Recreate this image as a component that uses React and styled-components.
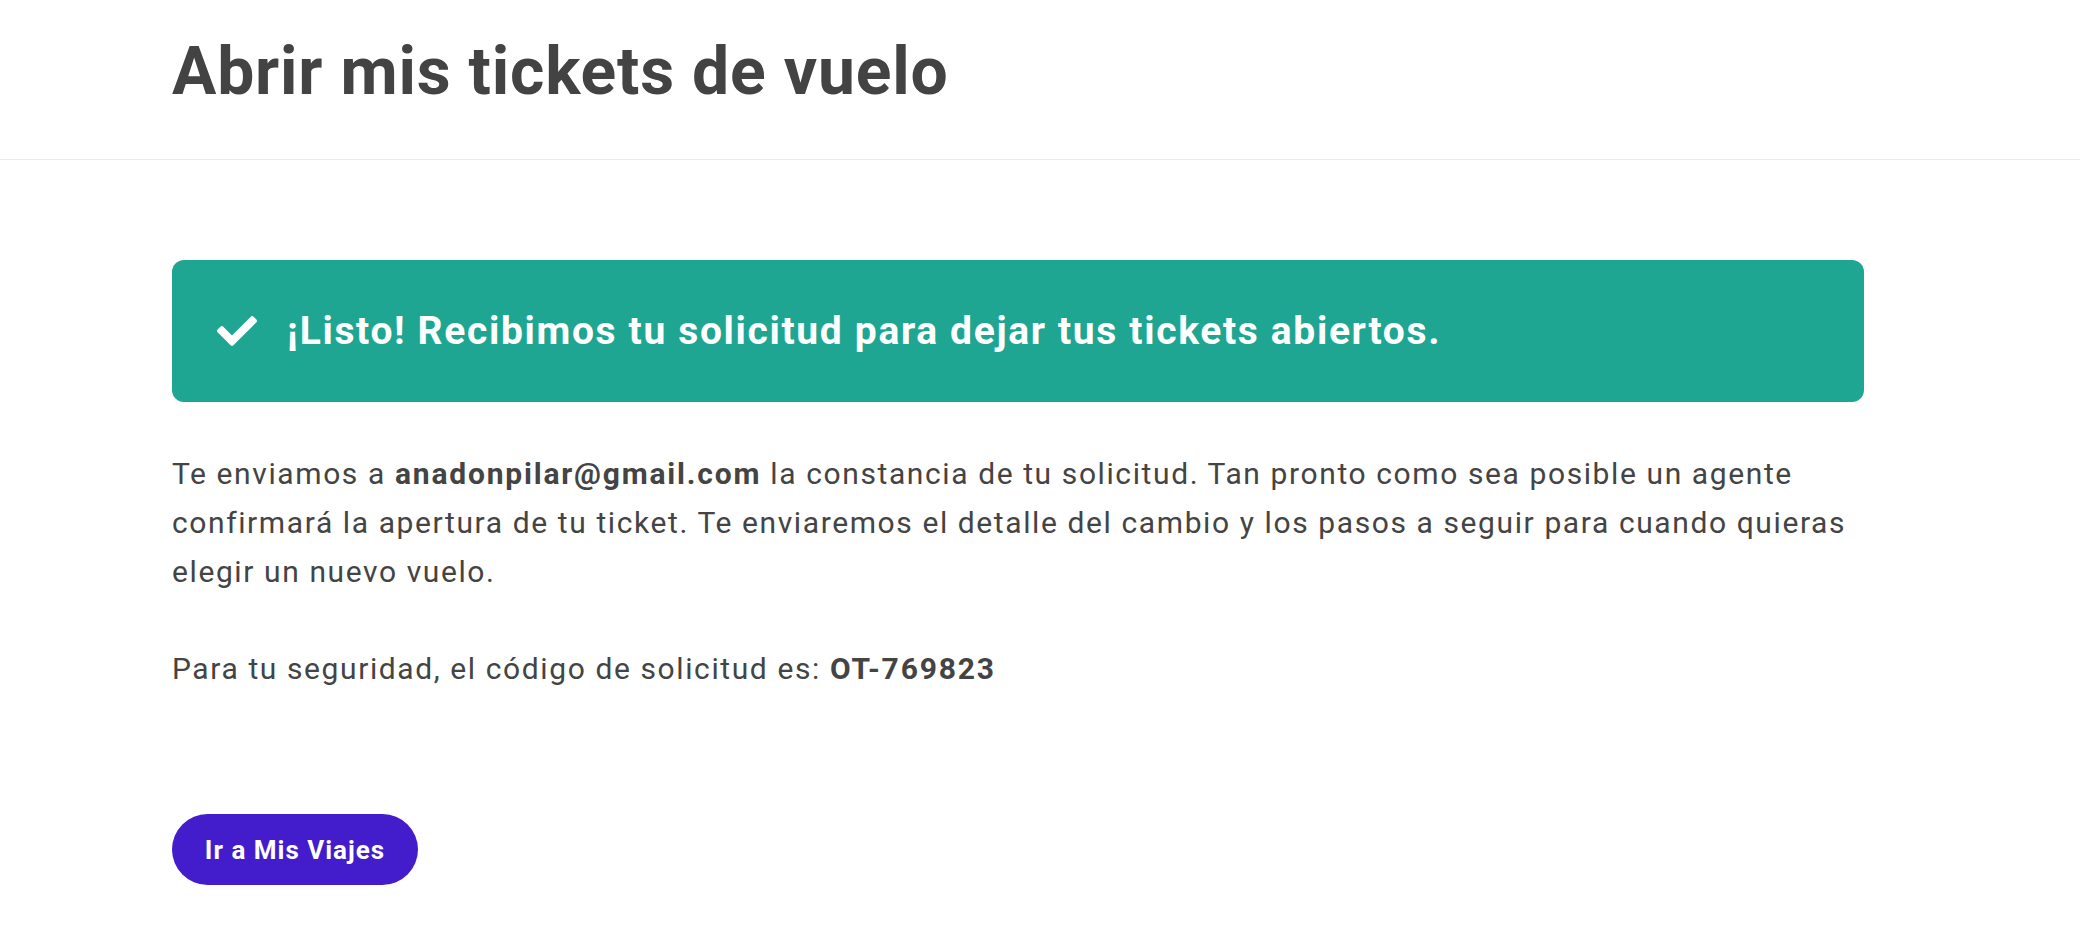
import React from "react";
import styled, { createGlobalStyle } from "styled-components";
import { FaCheck } from "react-icons/fa";

const GlobalStyle = createGlobalStyle`
  body {
    margin: 0;
    background: #ffffff;
    font-family: Roboto, "Noto Sans", Arial, sans-serif;
    color: #444444;
  }
`;

const Header = styled.header`
  height: 160px;
  box-sizing: border-box;
  padding: 0 0 0 172px;
  display: flex;
  align-items: center;
  border-bottom: 1px solid #ececec;
`;

const Title = styled.h1`
  margin: 0 0 16px 0;
  font-size: 66px;
  font-weight: 700;
  color: #434343;
  letter-spacing: 0.8px;
`;

const Content = styled.main`
  width: 1692px;
  margin-left: 172px;
  padding-top: 100px;
`;

const Banner = styled.div`
  height: 142px;
  box-sizing: border-box;
  padding: 0 44px 0 45px;
  display: flex;
  align-items: center;
  gap: 30px;
  background: #1ea693;
  border-radius: 12px;
  color: #ffffff;
`;

const CheckIcon = styled(FaCheck)`
  width: 40px;
  height: 40px;
  flex-shrink: 0;
`;

const BannerText = styled.span`
  font-size: 39px;
  font-weight: 700;
  letter-spacing: 1.65px;
`;

const Paragraph = styled.p`
  margin: ${(props) => props.$top}px 0 0 0;
  font-size: 30px;
  line-height: 49px;
  color: #444444;
  letter-spacing: 1.6px;

  strong {
    font-weight: 700;
    letter-spacing: 1.8px;
  }
`;

const Button = styled.button`
  margin-top: 121px;
  width: 246px;
  height: 71px;
  border: none;
  border-radius: 36px;
  background: #431ccb;
  color: #ffffff;
  font-family: Roboto, "Noto Sans", Arial, sans-serif;
  font-size: 26px;
  font-weight: 700;
  letter-spacing: 1px;
  cursor: pointer;
`;

const App = () => {
  return (
    <>
      <GlobalStyle />
      <Header>
        <Title>Abrir mis tickets de vuelo</Title>
      </Header>
      <Content>
        <Banner>
          <CheckIcon />
          <BannerText>
            ¡Listo! Recibimos tu solicitud para dejar tus tickets abiertos.
          </BannerText>
        </Banner>
        <Paragraph $top={47}>
          Te enviamos a <strong>anadonpilar@gmail.com</strong> la constancia de
          tu solicitud. Tan pronto como sea posible un agente confirmará la
          apertura de tu ticket. Te enviaremos el detalle del cambio y los pasos
          a seguir para cuando quieras elegir un nuevo vuelo.
        </Paragraph>
        <Paragraph $top={48}>
          Para tu seguridad, el código de solicitud es:{" "}
          <strong>OT-769823</strong>
        </Paragraph>
        <Button>Ir a Mis Viajes</Button>
      </Content>
    </>
  );
};

export default App;
